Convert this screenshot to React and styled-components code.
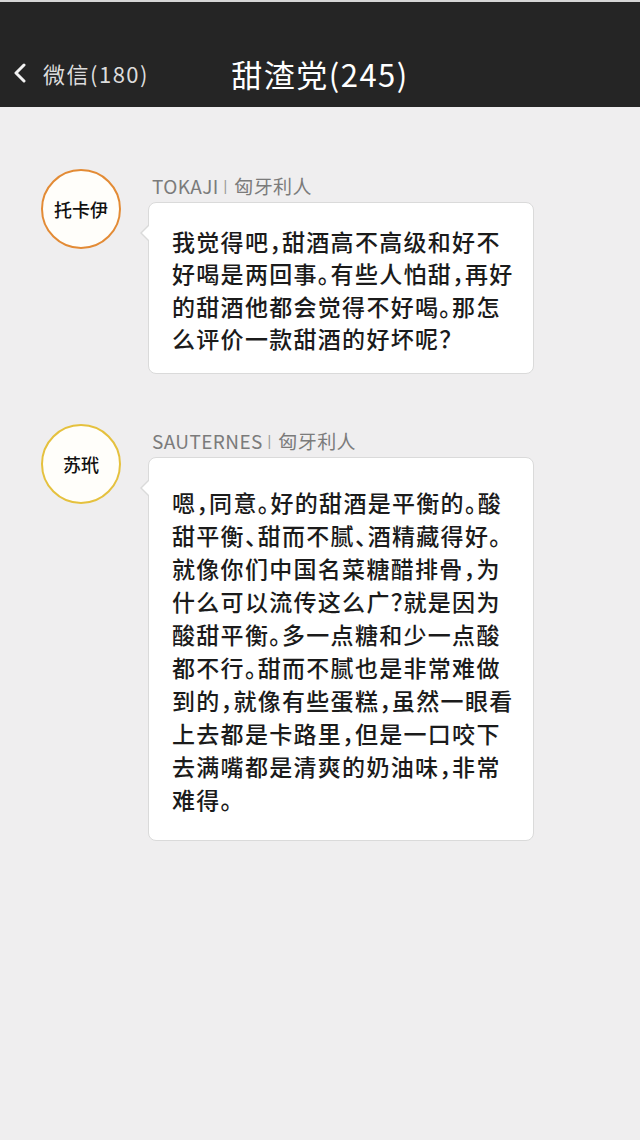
import React from "react";
import styled, { createGlobalStyle } from "styled-components";

const Global = createGlobalStyle`
  html, body { margin: 0; padding: 0; background: #efeeef; }
  body { font-family: "Noto Sans CJK SC", "Noto Sans", sans-serif; }
  * { box-sizing: border-box; }
`;

const Page = styled.div`
  min-height: 1140px;
  background: #efeeef;
`;

const Header = styled.header`
  height: 107px;
  background: #252525;
  border-top: 2px solid #d6d6d6;
  padding-top: 38px;
  display: grid;
  grid-template-columns: 1fr auto 1fr;
  align-items: start;
`;

const Back = styled.div`
  display: flex;
  align-items: center;
  height: 66px;
  padding-left: 13px;
  gap: 16px;
  color: #dcdcdc;
  font-size: 22px;
  letter-spacing: 1.5px;
`;

const Title = styled.h1`
  margin: 0;
  height: 66px;
  display: flex;
  align-items: center;
  color: #ffffff;
  font-size: 31px;
  font-weight: 400;
  letter-spacing: 1.5px;
`;

const Feed = styled.main`
  display: flex;
  flex-direction: column;
  gap: 50px;
  padding: 62px 0 0 41px;
`;

const Row = styled.section`
  display: flex;
  align-items: flex-start;
  gap: 27px;
`;

const Avatar = styled.div`
  width: 80px;
  height: 80px;
  flex: none;
  border-radius: 50%;
  border: 2.5px solid ${(p) => p.$ring};
  background: #fffefa;
  display: flex;
  align-items: center;
  justify-content: center;
  color: #111;
  font-size: 18px;
  font-weight: 500;
`;

const Body = styled.div`
  display: flex;
  flex-direction: column;
  gap: 4px;
  padding-top: 5px;
`;

const Name = styled.div`
  padding-left: 4px;
  font-size: 19px;
  line-height: 24px;
  color: #7b7b7b;
  letter-spacing: 0.4px;
  span {
    color: #9a9a9a;
    font-weight: 300;
    margin: 0 6px 0 4px;
  }
`;

const Bubble = styled.div`
  position: relative;
  width: 386px;
  background: #ffffff;
  border: 1px solid #dadada;
  border-radius: 8px;
  padding: ${(p) => p.$pt}px 12px ${(p) => p.$pb}px 23px;
  font-size: 23px;
  font-weight: 500;
  letter-spacing: 1.3px;
  line-height: ${(p) => p.$lh}px;
  color: #1b1b1b;
  font-feature-settings: "halt";
  &::before,
  &::after {
    content: "";
    position: absolute;
    top: 22px;
    width: 0;
    height: 0;
    border-top: 8px solid transparent;
    border-bottom: 8px solid transparent;
  }
  &::before {
    left: -9px;
    border-right: 8px solid #dadada;
  }
  &::after {
    left: -7.5px;
    border-right: 8px solid #ffffff;
  }
`;

const Chevron = () => (
  <svg width="14" height="20" viewBox="0 0 14 20">
    <polyline
      points="11,2 3,10 11,18"
      fill="none"
      stroke="#f2f2f2"
      strokeWidth="3"
      strokeLinecap="round"
      strokeLinejoin="round"
    />
  </svg>
);

const messages = [
  {
    avatar: "托卡伊",
    ring: "#e38b35",
    name: "TOKAJI",
    origin: "匈牙利人",
    lh: 32.3,
    pt: 22,
    pb: 19,
    lines: [
      "我觉得吧，甜酒高不高级和好不",
      "好喝是两回事。有些人怕甜，再好",
      "的甜酒他都会觉得不好喝。那怎",
      "么评价一款甜酒的好坏呢？",
    ],
  },
  {
    avatar: "苏玳",
    ring: "#e5c13e",
    name: "SAUTERNES",
    origin: "匈牙利人",
    lh: 33,
    pt: 28,
    pb: 24,
    lines: [
      "嗯，同意。好的甜酒是平衡的。酸",
      "甜平衡、甜而不腻、酒精藏得好。",
      "就像你们中国名菜糖醋排骨，为",
      "什么可以流传这么广？就是因为",
      "酸甜平衡。多一点糖和少一点酸",
      "都不行。甜而不腻也是非常难做",
      "到的，就像有些蛋糕，虽然一眼看",
      "上去都是卡路里，但是一口咬下",
      "去满嘴都是清爽的奶油味，非常",
      "难得。",
    ],
  },
];

export default function App() {
  return (
    <Page>
      <Global />
      <Header>
        <Back>
          <Chevron />
          <span>微信(180)</span>
        </Back>
        <Title>甜渣党(245)</Title>
        <div />
      </Header>
      <Feed>
        {messages.map((m) => (
          <Row key={m.name}>
            <Avatar $ring={m.ring}>{m.avatar}</Avatar>
            <Body>
              <Name>
                {m.name}
                <span>I</span>
                {m.origin}
              </Name>
              <Bubble $lh={m.lh} $pt={m.pt} $pb={m.pb}>
                {m.lines.map((l, i) => (
                  <React.Fragment key={i}>
                    {l}
                    {i < m.lines.length - 1 && <br />}
                  </React.Fragment>
                ))}
              </Bubble>
            </Body>
          </Row>
        ))}
      </Feed>
    </Page>
  );
}
